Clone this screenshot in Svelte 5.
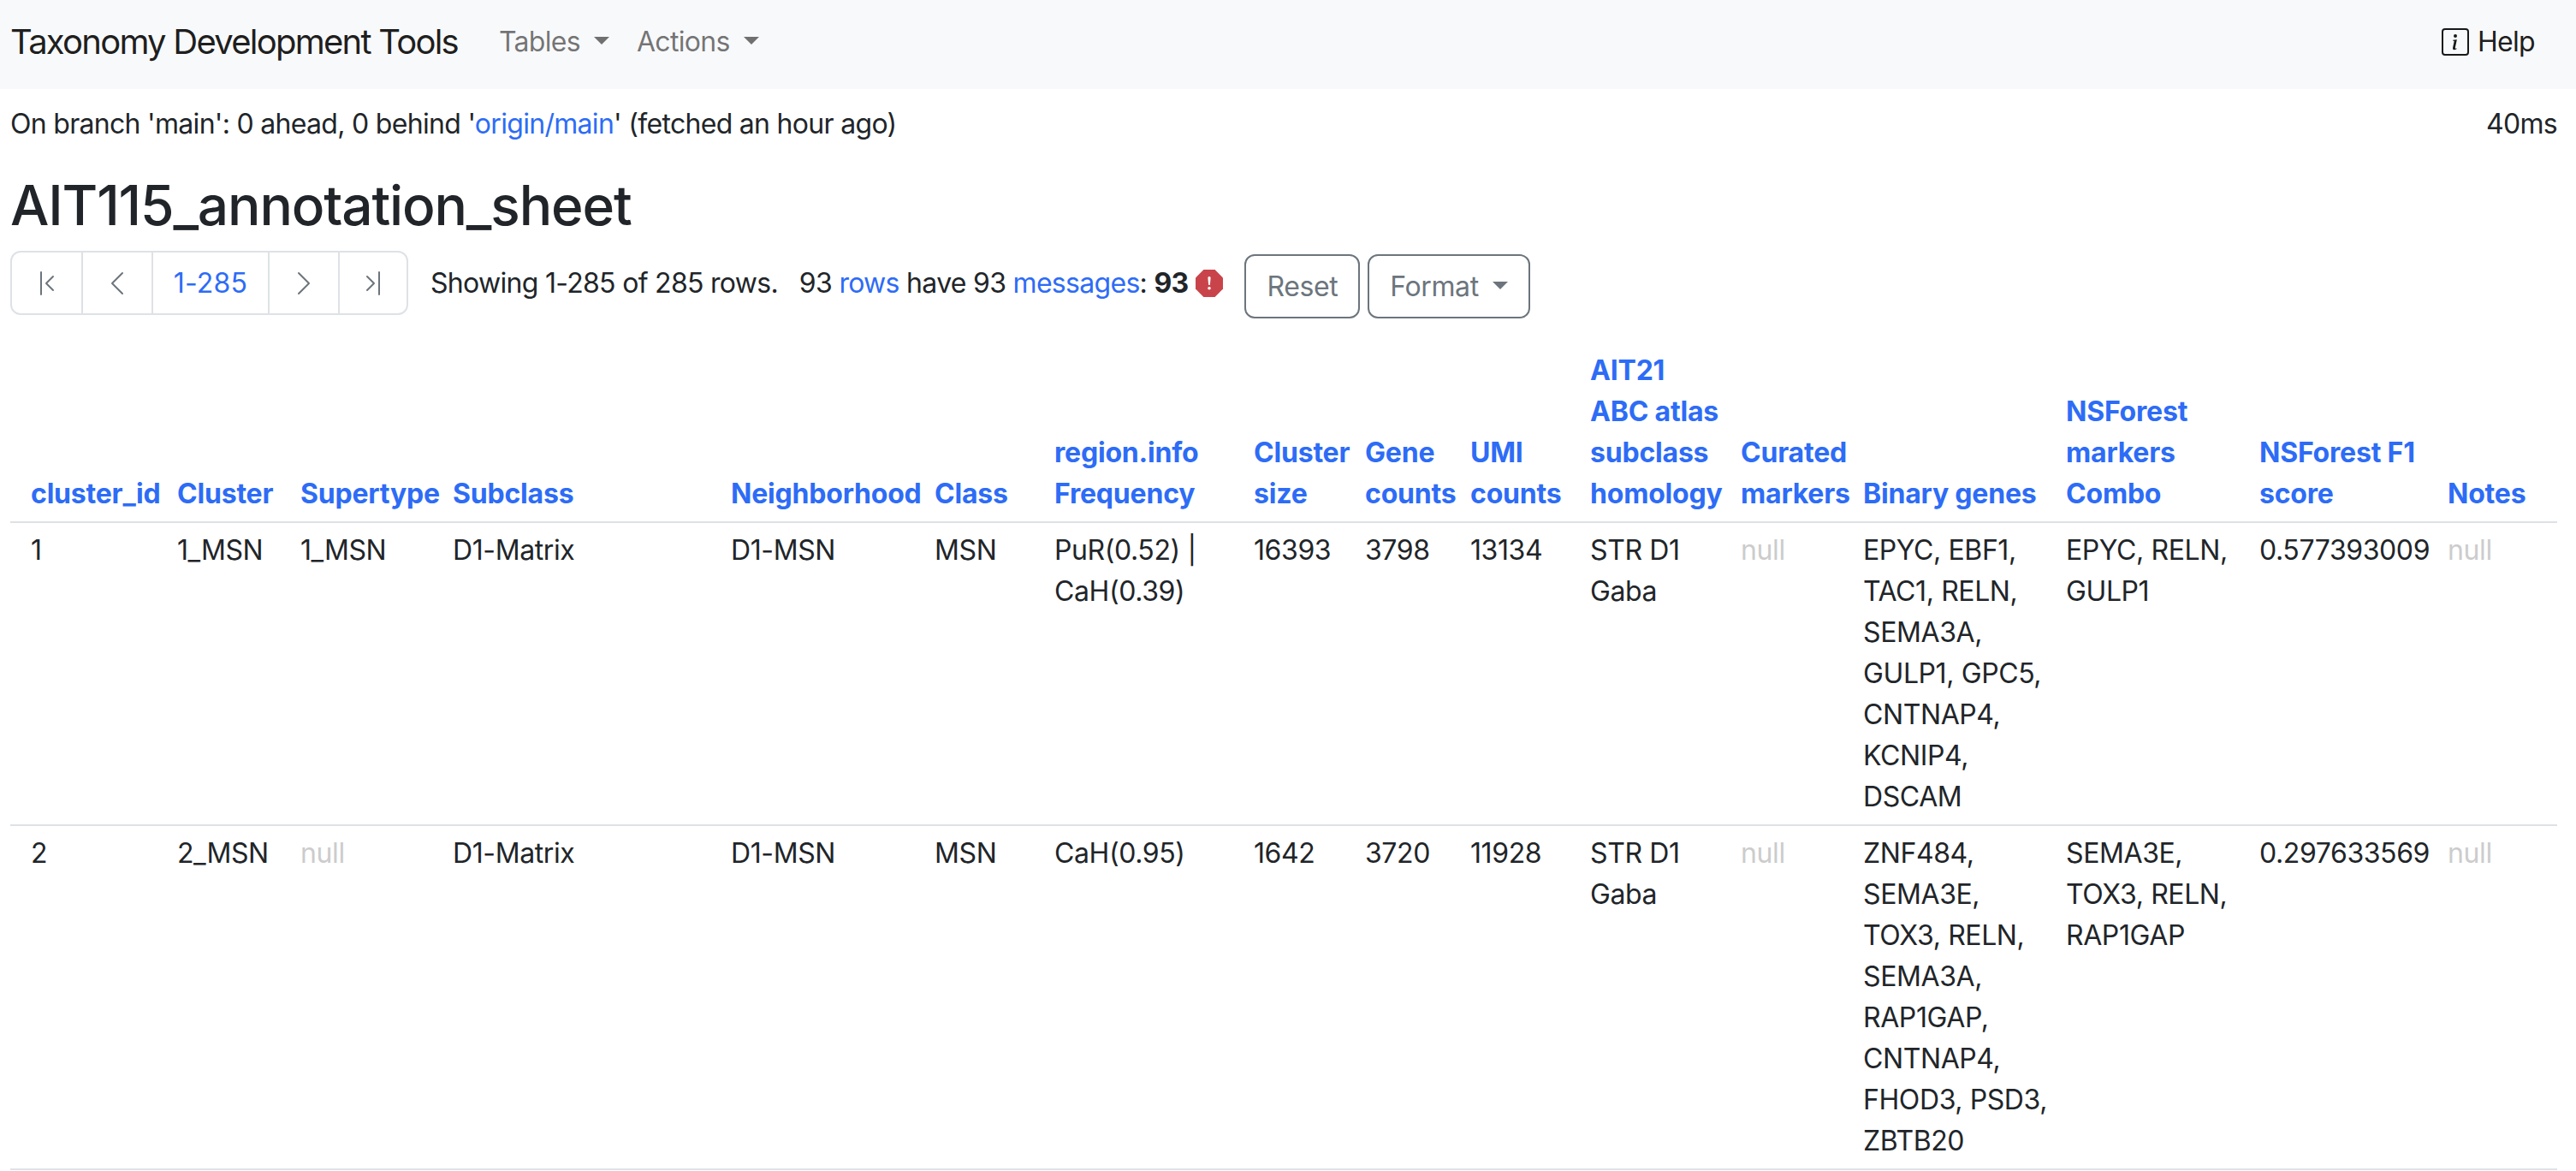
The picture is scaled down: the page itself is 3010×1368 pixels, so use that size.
<script lang="ts">
	// each cell is a list of display lines, null cells are greyed out
	const columns = [
		['cluster_id'],
		['Cluster'],
		['Supertype'],
		['Subclass'],
		['Neighborhood'],
		['Class'],
		['region.info', 'Frequency'],
		['Cluster', 'size'],
		['Gene', 'counts'],
		['UMI', 'counts'],
		['AIT21', 'ABC atlas', 'subclass', 'homology'],
		['Curated', 'markers'],
		['Binary genes'],
		['NSForest', 'markers', 'Combo'],
		['NSForest F1', 'score'],
		['Notes']
	];

	const widths = [187, 144, 178, 325, 238, 140, 233, 130, 123, 140, 176, 143, 237, 226, 220, 136];

	const rows = [
		[
			['1'],
			['1_MSN'],
			['1_MSN'],
			['D1-Matrix'],
			['D1-MSN'],
			['MSN'],
			['PuR(0.52) |', 'CaH(0.39)'],
			['16393'],
			['3798'],
			['13134'],
			['STR D1', 'Gaba'],
			null,
			['EPYC, EBF1,', 'TAC1, RELN,', 'SEMA3A,', 'GULP1, GPC5,', 'CNTNAP4,', 'KCNIP4,', 'DSCAM'],
			['EPYC, RELN,', 'GULP1'],
			['0.577393009'],
			null
		],
		[
			['2'],
			['2_MSN'],
			null,
			['D1-Matrix'],
			['D1-MSN'],
			['MSN'],
			['CaH(0.95)'],
			['1642'],
			['3720'],
			['11928'],
			['STR D1', 'Gaba'],
			null,
			['ZNF484,', 'SEMA3E,', 'TOX3, RELN,', 'SEMA3A,', 'RAP1GAP,', 'CNTNAP4,', 'FHOD3, PSD3,', 'ZBTB20'],
			['SEMA3E,', 'TOX3, RELN,', 'RAP1GAP'],
			['0.297633569'],
			null
		]
	];
</script>

<nav class="navbar">
	<span class="brand">Taxonomy Development Tools</span>
	<a class="nav-link caret" href="#tables">Tables</a>
	<a class="nav-link caret" href="#actions">Actions</a>
	<a class="help" href="#help">
		<svg viewBox="0 0 16 16" width="32" height="32" fill="currentColor">
			<path d="M14 1a1 1 0 0 1 1 1v12a1 1 0 0 1-1 1H2a1 1 0 0 1-1-1V2a1 1 0 0 1 1-1h12zM2 0a2 2 0 0 0-2 2v12a2 2 0 0 0 2 2h12a2 2 0 0 0 2-2V2a2 2 0 0 0-2-2H2z" />
			<path d="m8.93 6.588-2.29.287-.082.38.45.083c.294.07.352.176.288.469l-.738 3.468c-.194.897.105 1.319.808 1.319.545 0 1.178-.252 1.465-.598l.088-.416c-.2.176-.492.246-.686.246-.275 0-.375-.193-.304-.533L8.93 6.588zM9 4.5a1 1 0 1 1-2 0 1 1 0 0 1 2 0z" />
		</svg>
		Help
	</a>
</nav>

<main>
	<div class="status">
		<span>On branch 'main': 0 ahead, 0 behind '<a href="#origin">origin/main</a>' (fetched an hour ago)</span>
		<span>40ms</span>
	</div>

	<h2>AIT115_annotation_sheet</h2>

	<div class="toolbar">
		<div class="pager">
			<button aria-label="First page">
				<svg viewBox="0 0 16 16" width="32" height="32" fill="currentColor">
					<path fill-rule="evenodd" d="M11.854 3.646a.5.5 0 0 1 0 .708L8.207 8l3.647 3.646a.5.5 0 0 1-.708.708l-4-4a.5.5 0 0 1 0-.708l4-4a.5.5 0 0 1 .708 0zM4.5 1a.5.5 0 0 0-.5.5v13a.5.5 0 0 0 1 0v-13a.5.5 0 0 0-.5-.5z" />
				</svg>
			</button>
			<button aria-label="Previous page">
				<svg viewBox="0 0 16 16" width="32" height="32" fill="currentColor">
					<path fill-rule="evenodd" d="M11.354 1.646a.5.5 0 0 1 0 .708L5.707 8l5.647 5.646a.5.5 0 0 1-.708.708l-6-6a.5.5 0 0 1 0-.708l6-6a.5.5 0 0 1 .708 0z" />
				</svg>
			</button>
			<button class="range">1-285</button>
			<button aria-label="Next page">
				<svg viewBox="0 0 16 16" width="32" height="32" fill="currentColor">
					<path fill-rule="evenodd" d="M4.646 1.646a.5.5 0 0 1 .708 0l6 6a.5.5 0 0 1 0 .708l-6 6a.5.5 0 0 1-.708-.708L10.293 8 4.646 2.354a.5.5 0 0 1 0-.708z" />
				</svg>
			</button>
			<button aria-label="Last page">
				<svg viewBox="0 0 16 16" width="32" height="32" fill="currentColor">
					<path fill-rule="evenodd" d="M4.146 3.646a.5.5 0 0 1 .708 0l4 4a.5.5 0 0 1 0 .708l-4 4a.5.5 0 0 1-.708-.708L7.793 8 4.146 4.354a.5.5 0 0 1 0-.708zM11.5 1a.5.5 0 0 1 .5.5v13a.5.5 0 0 1-1 0v-13a.5.5 0 0 1 .5-.5z" />
				</svg>
			</button>
		</div>

		<div class="summary">
			Showing 1-285 of 285 rows.&nbsp;&nbsp; 93 <a href="#rows">rows</a> have 93 <a href="#messages">messages</a>: <b>93</b>
			<svg class="stop" viewBox="0 0 16 16" width="32" height="32">
				<path fill="#c9444a" d="M4.7 0h6.6L16 4.7v6.6L11.3 16H4.7L0 11.3V4.7z" />
				<path fill="#fff" d="M8 4c.5 0 .8.4.8.9l-.35 3.7a.45.45 0 0 1-.9 0L7.2 4.9C7.2 4.4 7.5 4 8 4zm0 6a.9.9 0 1 1 0 1.8A.9.9 0 0 1 8 10z" />
			</svg>
		</div>

		<button class="btn">Reset</button>
		<button class="btn caret">Format</button>
	</div>

	<table>
		<colgroup>
			{#each widths as w}
				<col style="width: {w}px" />
			{/each}
		</colgroup>
		<thead>
			<tr>
				{#each columns as lines}
					<th>
						{#each lines as line, i}
							{#if i > 0}<br />{/if}<a href="#sort">{line}</a>
						{/each}
					</th>
				{/each}
			</tr>
		</thead>
		<tbody>
			{#each rows as row}
				<tr>
					{#each row as cell}
						{#if cell}
							<td>
								{#each cell as line, i}
									{#if i > 0}<br />{/if}{line}
								{/each}
							</td>
						{:else}
							<td class="null">null</td>
						{/if}
					{/each}
				</tr>
			{/each}
		</tbody>
	</table>
</main>

<style>
	:global(body) {
		margin: 0;
		background: #fff;
		color: #212529;
		font-family: Inter, "Noto Sans", sans-serif;
		font-size: 32px;
		line-height: 48px;
		letter-spacing: -0.7px;
	}

	a {
		color: #2d6cf6;
		text-decoration: none;
	}

	.navbar {
		display: flex;
		align-items: center;
		height: 104px;
		padding: 0 12px 6px;
		box-sizing: border-box;
		background: #f8f9fa;
	}

	.brand {
		font-size: 40px;
		letter-spacing: -1.75px;
		color: rgba(0, 0, 0, 0.9);
		margin-right: 48px;
	}

	.nav-link {
		color: rgba(0, 0, 0, 0.55);
		margin-right: 32px;
	}

	.caret::after {
		content: "";
		display: inline-block;
		margin-left: 16px;
		vertical-align: 8px;
		border-top: 9.6px solid;
		border-left: 9.6px solid transparent;
		border-right: 9.6px solid transparent;
	}

	.help {
		display: flex;
		align-items: center;
		gap: 10px;
		margin-left: auto;
		margin-right: 36px;
		color: rgba(0, 0, 0, 0.9);
	}

	main {
		padding: 0 22px 0 12px;
	}

	.status {
		display: flex;
		justify-content: space-between;
		margin-top: 17px;
	}

	h2 {
		font-size: 64px;
		font-weight: 500;
		letter-spacing: -1.15px;
		line-height: 76px;
		margin: 33px 0 15px;
	}

	.toolbar {
		display: flex;
		align-items: flex-start;
	}

	.pager {
		display: flex;
		height: 75px;
		box-sizing: border-box;
		border: 2px solid #dee2e6;
		border-radius: 12px;
		margin-right: 26px;
	}

	.pager button {
		display: flex;
		align-items: center;
		justify-content: center;
		width: 82px;
		padding: 0;
		border: none;
		border-left: 2px solid #dee2e6;
		background: none;
		color: #6c757d;
		font: inherit;
		letter-spacing: -0.4px;
	}

	.pager button:first-child {
		width: 81px;
		border-left: none;
	}

	.pager button:last-child {
		width: 80px;
	}

	.pager .range {
		width: 136px;
		color: #2d6cf6;
		letter-spacing: 0.2px;
	}

	.summary {
		display: flex;
		align-items: center;
		white-space: pre-wrap;
		height: 75px;
		margin-right: 25px;
	}

	.stop {
		margin-left: 9px;
	}

	.btn {
		height: 75px;
		margin-top: 4px;
		margin-right: 9px;
		padding: 0 24px;
		border: 2px solid #6c757d;
		border-radius: 12px;
		background: #fff;
		color: #6c757d;
		font: inherit;
		letter-spacing: -0.4px;
	}

	table {
		width: 2976px;
		table-layout: fixed;
		border-collapse: collapse;
		margin-top: 29px;
		letter-spacing: -0.4px;
	}

	th,
	td {
		padding: 8px;
		text-align: left;
		border-bottom: 2px solid #dee2e6;
		white-space: nowrap;
	}

	th {
		vertical-align: bottom;
		font-weight: 700;
		letter-spacing: -0.2px;
	}

	td {
		vertical-align: top;
	}

	th:first-child,
	td:first-child {
		padding-left: 24px;
	}

	.null {
		color: #ccc;
	}
</style>
